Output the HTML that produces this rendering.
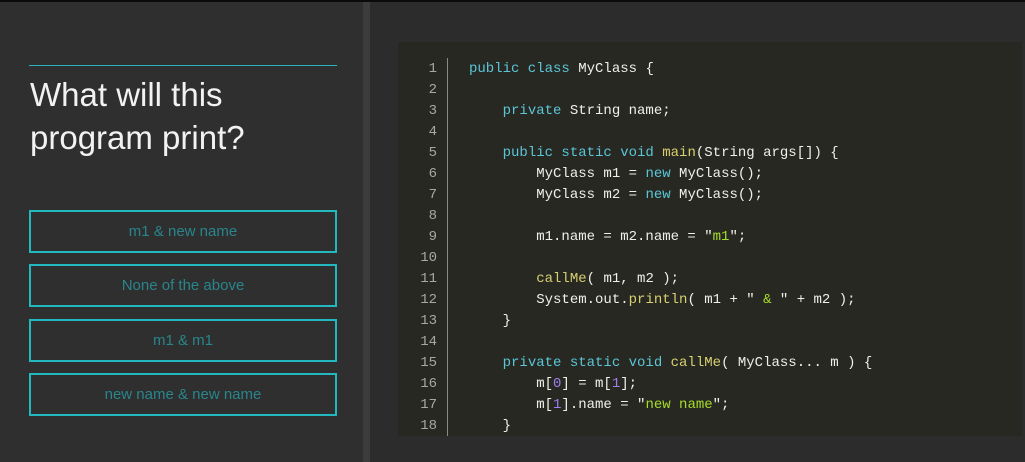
<!DOCTYPE html>
<html><head><style>
*{margin:0;padding:0;box-sizing:border-box}
body{width:1025px;height:462px;background:#2c2c2c;position:relative;overflow:hidden;font-family:"Liberation Sans",sans-serif}
.top{position:absolute;left:0;top:0;width:1025px;height:2px;background:#0a0a0a}
.left{position:absolute;left:0;top:2px;width:363px;height:460px;background:#2f2f2f}
.div{position:absolute;left:363px;top:2px;width:7px;height:460px;background:#3c3c3c}
.hr{position:absolute;left:29px;top:65px;width:308px;height:1px;background:#2ab5bc}
h1{position:absolute;left:30px;top:73px;font-weight:normal;font-size:33px;line-height:43px;color:#f2f2f2}
.btn{position:absolute;left:29px;width:308px;height:43px;border:2px solid #21b8c0;color:#28868c;font-size:15px;text-align:center;line-height:39px;font-weight:300}
.code{position:absolute;left:398px;top:42px;width:624px;height:394px;background:#272822}
.ln{position:absolute;left:0;top:17px;width:39px;text-align:right;font-family:"Liberation Mono",monospace;font-size:14px;line-height:21px;color:#a8a8a0}
.bar{position:absolute;left:49px;top:16px;width:1px;height:378px;background:#8a8a80}
pre{position:absolute;left:71px;top:17px;font-family:"Liberation Mono",monospace;font-size:14px;line-height:21px;color:#f0f0ea}
.k{color:#5bc6d8}.f{color:#d8d070}.s{color:#a6dc2a}.n{color:#a07ef0}
</style></head><body>
<div class="top"></div>
<div class="left"></div>
<div class="div"></div>
<div class="hr"></div>
<h1>What will this<br>program print?</h1>
<div class="btn" style="top:210px">m1 &amp; new name</div>
<div class="btn" style="top:264px">None of the above</div>
<div class="btn" style="top:319px">m1 &amp; m1</div>
<div class="btn" style="top:373px">new name &amp; new name</div>
<div class="code">
<div class="ln">1<br>2<br>3<br>4<br>5<br>6<br>7<br>8<br>9<br>10<br>11<br>12<br>13<br>14<br>15<br>16<br>17<br>18</div>
<div class="bar"></div>
<pre><span class="k">public class</span> MyClass {

    <span class="k">private</span> String name;

    <span class="k">public static void</span> <span class="f">main</span>(String args[]) {
        MyClass m1 = <span class="k">new</span> MyClass();
        MyClass m2 = <span class="k">new</span> MyClass();

        m1.name = m2.name = "<span class="s">m1</span>";

        <span class="f">callMe</span>( m1, m2 );
        System.out.<span class="f">println</span>( m1 + " <span class="s">&amp;</span> " + m2 );
    }

    <span class="k">private static void</span> <span class="f">callMe</span>( MyClass... m ) {
        m[<span class="n">0</span>] = m[<span class="n">1</span>];
        m[<span class="n">1</span>].name = "<span class="s">new name</span>";
    }</pre>
</div>
</body></html>
